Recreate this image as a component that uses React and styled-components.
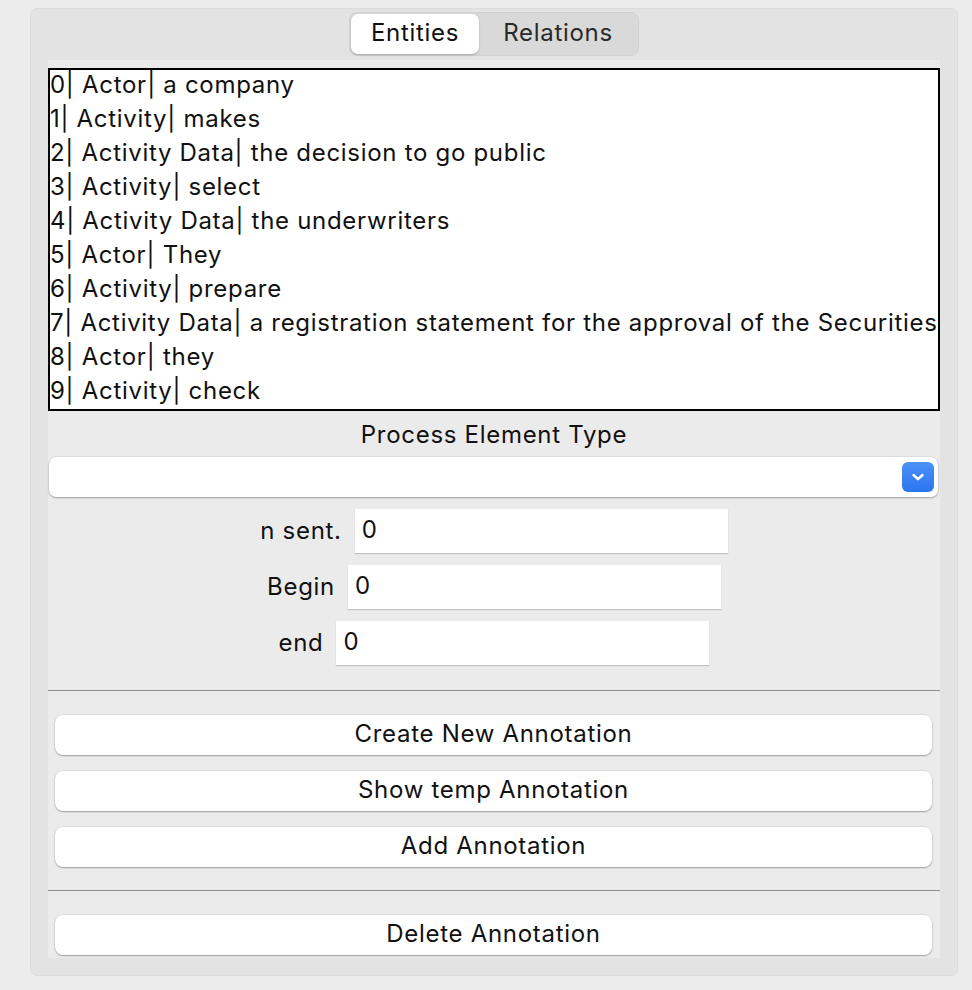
import React, {useState} from "react"
import styled, {createGlobalStyle} from "styled-components"

const GlobalStyle = createGlobalStyle`
  html, body {
    margin: 0;
    padding: 0;
    background: #ececec;
    font-family: Inter, "Liberation Sans", Arial, sans-serif;
    letter-spacing: 0.7px;
    color: #111;
  }
`;

const Panel = styled.div`
  box-sizing: border-box;
  width: 928px;
  height: 968px;
  margin: 8px 0 0 30px;
  background: #e3e3e3;
  border: 1px solid #dcdcdc;
  border-radius: 7px;
  display: flex;
  flex-direction: column;
  align-items: center;
  padding-top: 3px;
`;

const TabBar = styled.div`
  display: flex;
  background: #d9d9d9;
  border: 1px solid #d2d2d2;
  border-radius: 8px;
  padding: 1px;
  height: 40px;
`;

const Tab = styled.div`
  display: flex;
  align-items: center;
  justify-content: center;
  width: ${p => p.$w}px;
  padding-bottom: 3px;
  font-size: 24px;
  color: ${p => (p.$active ? "#111" : "#2a2a2a")};
  background: ${p => (p.$active ? "#fff" : "transparent")};
  border-radius: 7px;
  box-shadow: ${p => (p.$active ? "0 1px 2px rgba(0,0,0,0.25)" : "none")};
  cursor: default;
`;

const Inner = styled.div`
  box-sizing: border-box;
  align-self: stretch;
  margin: 4px 17px 17px 17px;
  flex: 1;
  background: #ebebeb;
  padding-top: 8px;
  display: flex;
  flex-direction: column;
`;

const ListBox = styled.div`
  box-sizing: border-box;
  height: 343px;
  border: 2px solid #000;
  background: #fff;
  overflow: hidden;
`;

const ListRow = styled.div`
  height: 34px;
  line-height: 30px;
  font-size: 24px;
  white-space: nowrap;
  color: #111;
`;

const Caption = styled.div`
  text-align: center;
  font-size: 24px;
  line-height: 26px;
  margin-top: 11px;
`;

const Select = styled.div`
  box-sizing: border-box;
  height: 40px;
  margin: 9px 2px 0 1px;
  background: #fff;
  border-radius: 7px;
  box-shadow: 0 1px 2px rgba(0,0,0,0.3), 0 0 0 0.5px rgba(0,0,0,0.08);
  display: flex;
  align-items: center;
  justify-content: flex-end;
  padding-right: 4px;
`;

const SelectArrow = styled.div`
  width: 32px;
  height: 30px;
  border-radius: 6px;
  background: linear-gradient(#4d92f8, #2b75ef);
  display: flex;
  align-items: center;
  justify-content: center;
`;

const Form = styled.div`
  display: flex;
  flex-direction: column;
  gap: 12px;
  margin-top: 12px;
`;

const FieldRow = styled.div`
  display: flex;
  justify-content: center;
  align-items: center;
  gap: 13px;
`;

const FieldLabel = styled.span`
  font-size: 24px;
  padding-bottom: 2px;
`;

const FieldInput = styled.div`
  box-sizing: border-box;
  width: 373px;
  height: 44px;
  background: #fff;
  box-shadow: 0 1px 1px rgba(0,0,0,0.18);
  font-size: 24px;
  line-height: 41px;
  padding-left: 7px;
`;

const Divider = styled.div`
  height: 1px;
  background: #8c8c8c;
  margin: ${p => p.$top}px 0 24px 0;
`;

const Buttons = styled.div`
  display: flex;
  flex-direction: column;
  gap: 16px;
  padding: 0 8px 0 7px;
`;

const Button = styled.div`
  box-sizing: border-box;
  height: 40px;
  padding-bottom: 3px;
  background: #fff;
  border-radius: 8px;
  box-shadow: 0 1px 1.5px rgba(0,0,0,0.3), 0 0 0 0.5px rgba(0,0,0,0.08);
  display: flex;
  align-items: center;
  justify-content: center;
  font-size: 24px;
  color: #111;
`;

const entities = [
  "0| Actor| a company",
  "1| Activity| makes",
  "2| Activity Data| the decision to go public",
  "3| Activity| select",
  "4| Activity Data| the underwriters",
  "5| Actor| They",
  "6| Activity| prepare",
  "7| Activity Data| a registration statement for the approval of the Securities",
  "8| Actor| they",
  "9| Activity| check",
];

const fields = ["n sent.", "Begin", "end"];

export default function App() {
  const [tab, setTab] = useState(0);
  return (
    <>
      <GlobalStyle/>
      <Panel>
        <TabBar>
          <Tab $w={128} $active={tab === 0} onClick={() => setTab(0)}>Entities</Tab>
          <Tab $w={158} $active={tab === 1} onClick={() => setTab(1)}>Relations</Tab>
        </TabBar>
        <Inner>
          <ListBox>
            {entities.map((e, i) => <ListRow key={i}>{e}</ListRow>)}
          </ListBox>
          <Caption>Process Element Type</Caption>
          <Select>
            <SelectArrow>
              <svg width="14" height="10" viewBox="0 0 14 10">
                <path d="M2.5 3 L7 7.2 L11.5 3" fill="none" stroke="#fff" strokeWidth="2.4"
                      strokeLinecap="round" strokeLinejoin="round"/>
              </svg>
            </SelectArrow>
          </Select>
          <Form>
            {fields.map(label => (
              <FieldRow key={label}>
                <FieldLabel>{label}</FieldLabel>
                <FieldInput>0</FieldInput>
              </FieldRow>
            ))}
          </Form>
          <Divider $top={25}/>
          <Buttons>
            <Button>Create New Annotation</Button>
            <Button>Show temp Annotation</Button>
            <Button>Add Annotation</Button>
          </Buttons>
          <Divider $top={23}/>
          <Buttons>
            <Button>Delete Annotation</Button>
          </Buttons>
        </Inner>
      </Panel>
    </>
  );
}
